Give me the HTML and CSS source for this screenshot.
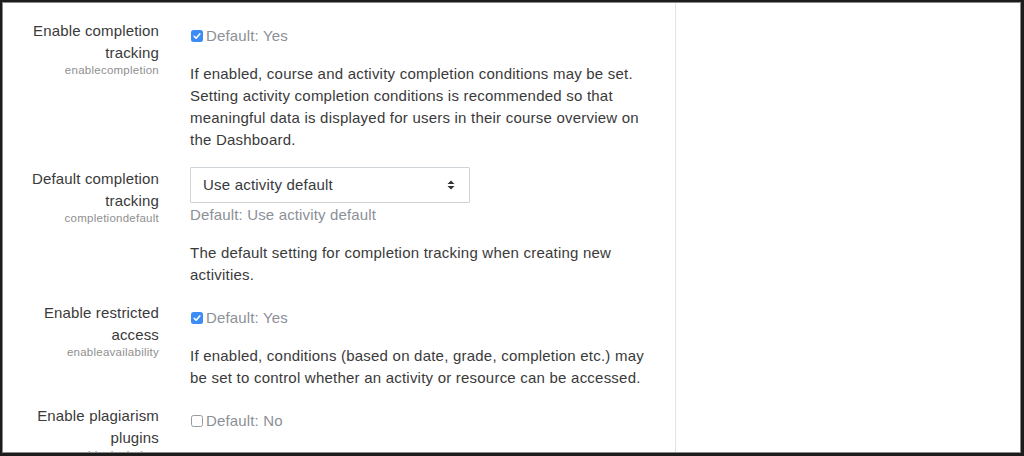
FILE: index.html
```html
<!DOCTYPE html>
<html lang="en">
<head>
<meta charset="utf-8">
<title>Course settings</title>
<link rel="stylesheet" href="styles.css">
</head>
<body>
<div class="frame">
  <main class="panel">
    <div class="setting">
      <div class="label-col">
        <div class="label">Enable completion tracking</div>
        <div class="key">enablecompletion</div>
      </div>
      <div class="control-col">
        <div class="check-row"><span class="cb checked"><svg viewBox="0 0 12 12" width="12" height="12"><path d="M3.2 6.3 L5.1 8.2 L8.8 3.9" fill="none" stroke="#fff" stroke-width="1.6" stroke-linecap="round" stroke-linejoin="round"/></svg></span><span class="default">Default: Yes</span></div>
        <p class="desc">If enabled, course and activity completion conditions may be set. Setting activity completion conditions is recommended so that meaningful data is displayed for users in their course overview on the Dashboard.</p>
      </div>
    </div>
    <div class="setting">
      <div class="label-col label-col-select">
        <div class="label">Default completion tracking</div>
        <div class="key">completiondefault</div>
      </div>
      <div class="control-col control-col-select">
        <div class="select"><span>Use activity default</span><svg class="arrows" viewBox="0 0 8 10" width="8" height="10"><path d="M4 0.5 L7.5 4 L0.5 4 Z M0.5 6 L7.5 6 L4 9.5 Z" fill="#333"/></svg></div>
        <div class="default default-block">Default: Use activity default</div>
        <p class="desc">The default setting for completion tracking when creating new activities.</p>
      </div>
    </div>
    <div class="setting">
      <div class="label-col">
        <div class="label">Enable restricted access</div>
        <div class="key">enableavailability</div>
      </div>
      <div class="control-col">
        <div class="check-row"><span class="cb checked"><svg viewBox="0 0 12 12" width="12" height="12"><path d="M3.2 6.3 L5.1 8.2 L8.8 3.9" fill="none" stroke="#fff" stroke-width="1.6" stroke-linecap="round" stroke-linejoin="round"/></svg></span><span class="default">Default: Yes</span></div>
        <p class="desc">If enabled, conditions (based on date, grade, completion etc.) may be set to control whether an activity or resource can be accessed.</p>
      </div>
    </div>
    <div class="setting">
      <div class="label-col">
        <div class="label">Enable plagiarism plugins</div>
        <div class="key">enableplagiarism</div>
      </div>
      <div class="control-col">
        <div class="check-row"><span class="cb"></span><span class="default">Default: No</span></div>
        <p class="desc">This will allow administrators to configure plagiarism plugins (if installed)</p>
      </div>
    </div>
  </main>
  <aside class="side"></aside>
</div>
</body>
</html>
```

FILE: styles.css
```css
* { box-sizing: border-box; }
html, body {
  margin: 0;
  padding: 0;
  width: 1024px;
  height: 456px;
  overflow: hidden;
  background: #fff;
}
body {
  font-family: "Liberation Sans", Arial, sans-serif;
  color: #373a3c;
  font-size: 15px;
  line-height: 22px;
}
.frame {
  width: 1024px;
  height: 456px;
  border: 2px solid #1c1c1c;
  border-right-width: 3px;
  border-bottom-width: 3px;
  box-shadow: inset 0 0 0 1px #8a8a8a;
  display: flex;
  overflow: hidden;
  padding: 1px;
}
.panel {
  width: 673px;
  flex: none;
  border-right: 1px solid #e3e3e3;
  padding-top: 17px;
  overflow: hidden;
}
.side {
  flex: 1;
  background: #fff;
}
.setting {
  display: flex;
  gap: 31px;
  margin-bottom: 16px;
}
.label-col {
  width: 156px;
  flex: none;
  text-align: right;
}
.label-col-select { padding-top: 1px; }
.label {
  font-size: 15px;
  line-height: 21.5px;
  color: #3a3a3a;
  letter-spacing: 0.15px;
}
.key {
  font-size: 11.5px;
  line-height: 15px;
  color: #8f8f8f;
  letter-spacing: 0.25px;
}
.control-col {
  width: 462px;
  padding-top: 5px;
}
.control-col-select { padding-top: 0; }
.check-row {
  display: flex;
  align-items: center;
  height: 22px;
}
.cb {
  width: 12px;
  height: 12px;
  border-radius: 2.5px;
  border: 1px solid #9a9a9a;
  background: #fff;
  margin-left: 1px;
  margin-right: 3px;
  display: inline-flex;
  align-items: center;
  justify-content: center;
  flex: none;
}
.cb.checked {
  border: none;
  background: #3b8df5;
}
.cb svg { display: block; }
.default {
  color: #8c9097;
  font-size: 15px;
  letter-spacing: 0.15px;
}
.default-block {
  line-height: 22px;
  margin-top: 1px;
}
.desc {
  margin: 16px 0 0;
  font-size: 15px;
  line-height: 22px;
  color: #3a3a3a;
  letter-spacing: 0.22px;
}
.select {
  width: 280px;
  height: 36px;
  border: 1px solid #cfd4d9;
  border-radius: 1px;
  display: flex;
  align-items: center;
  justify-content: space-between;
  padding: 0 14px 0 12px;
  color: #373a3c;
  letter-spacing: 0.2px;
}
.arrows { display: block; }
```
